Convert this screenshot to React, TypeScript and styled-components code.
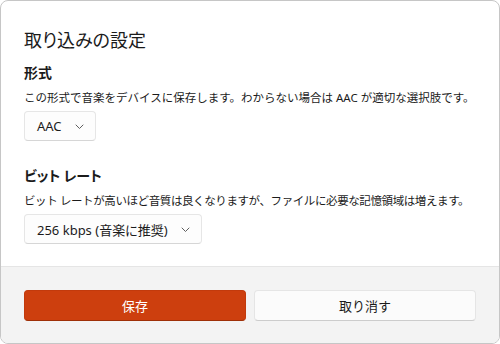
import React from "react";
import styled, { createGlobalStyle } from "styled-components";

const Global = createGlobalStyle`
  html, body { margin: 0; padding: 0; background: #ffffff; }
  body {
    font-family: "Noto Sans", "Noto Sans CJK JP", sans-serif;
    color: #1b1b1b;
    -webkit-font-smoothing: antialiased;
  }
  * { box-sizing: border-box; }
`;

const Dialog = styled.div`
  width: 500px;
  height: 344px;
  border: 1px solid #c6c6c6;
  border-radius: 8px;
  overflow: hidden;
  display: flex;
  flex-direction: column;
  background: #ffffff;
`;

const Body = styled.div`
  flex: 1;
  padding: 26px 23px 0;
  display: flex;
  flex-direction: column;
`;

const Title = styled.h1`
  margin: 0 0 11px;
  font-size: 18px;
  line-height: 24px;
  font-weight: 400;
  font-family: "Noto Sans CJK JP", sans-serif;
  font-feature-settings: "palt";
`;

const Section = styled.section<{ $top?: number }>`
  display: flex;
  flex-direction: column;
  align-items: flex-start;
  margin-top: ${(p) => p.$top ?? 0}px;
`;

const Heading = styled.h2`
  margin: 0;
  font-size: 14px;
  line-height: 20px;
  font-weight: 700;
  font-family: "Noto Sans CJK JP", sans-serif;
  font-feature-settings: "palt";
`;

const Desc = styled.p<{ $tracking?: number }>`
  margin: 7px 0 4px;
  font-size: 11.5px;
  line-height: 18px;
  letter-spacing: ${(p) => p.$tracking ?? 0}px;
  white-space: nowrap;
`;

const Select = styled.div`
  height: 30px;
  display: flex;
  align-items: center;
  gap: 13px;
  padding: 0 11px 0 12px;
  border: 1px solid #e6e6e6;
  border-bottom-color: #d6d6d6;
  border-radius: 4px;
  background: #fdfdfd;
  font-size: 13px;
  font-feature-settings: "palt";
`;

const Chevron = styled.svg`
  width: 9px;
  height: 9px;
  flex: none;
`;

const Footer = styled.div`
  height: 77px;
  background: #f3f3f3;
  border-top: 1px solid #e5e5e5;
  padding: 23px 23px 0;
  display: grid;
  grid-template-columns: 1fr 1fr;
  gap: 8px;
  align-items: start;
`;

const Button = styled.button<{ $primary?: boolean }>`
  height: 31px;
  border-radius: 4px;
  font-family: "Noto Sans CJK JP", sans-serif;
  font-size: 13px;
  cursor: pointer;
  border: 1px solid ${(p) => (p.$primary ? "#c23a0c" : "#e5e5e5")};
  border-bottom-color: ${(p) => (p.$primary ? "#9e2f08" : "#cccccc")};
  background: ${(p) => (p.$primary ? "#cd3f0e" : "#fbfbfb")};
  color: ${(p) => (p.$primary ? "#ffffff" : "#1b1b1b")};
`;

const ChevronIcon = () => (
  <Chevron viewBox="0 0 9 9">
    <path d="M1 3 L4.5 6.5 L8 3" fill="none" stroke="#5f5f5f" strokeWidth="1" strokeLinecap="round" strokeLinejoin="round" />
  </Chevron>
);

export default function App() {
  return (
    <>
      <Global />
      <Dialog>
        <Body>
          <Title>取り込みの設定</Title>
          <Section>
            <Heading>形式</Heading>
            <Desc>この形式で音楽をデバイスに保存します。わからない場合は AAC が適切な選択肢です。</Desc>
            <Select>
              <span>AAC</span>
              <ChevronIcon />
            </Select>
          </Section>
          <Section $top={24}>
            <Heading>ビット レート</Heading>
            <Desc $tracking={-0.4}>ビット レートが高いほど音質は良くなりますが、ファイルに必要な記憶領域は増えます。</Desc>
            <Select>
              <span>256 kbps (音楽に推奨)</span>
              <ChevronIcon />
            </Select>
          </Section>
        </Body>
        <Footer>
          <Button $primary>保存</Button>
          <Button>取り消す</Button>
        </Footer>
      </Dialog>
    </>
  );
}
